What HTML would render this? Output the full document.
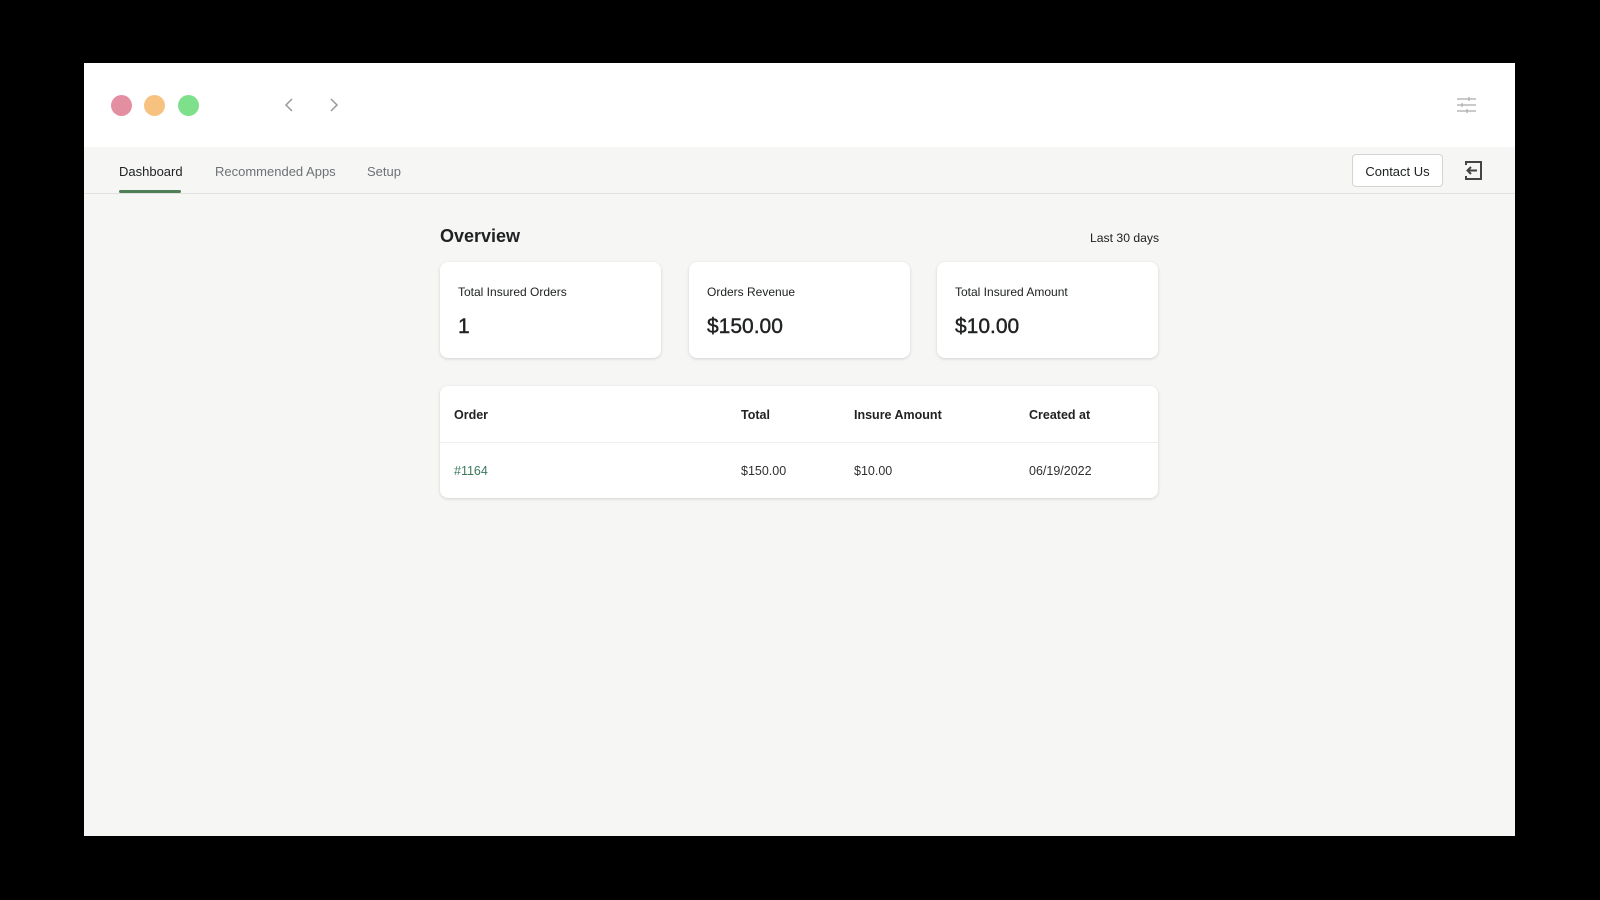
<!DOCTYPE html>
<html><head><meta charset="utf-8"><style>
*{box-sizing:border-box;margin:0;padding:0}
body{width:1600px;height:900px;background:#000;position:relative;overflow:hidden;font-family:"Liberation Sans",sans-serif;color:#202223}
.win{position:absolute;left:84px;top:63px;width:1431px;height:773px;background:#f6f6f5}
.top{position:absolute;left:0;top:0;width:100%;height:84px;background:#fff}
.dot{position:absolute;top:32px;width:21px;height:21px;border-radius:50%}
.tabs{position:absolute;left:0;top:84px;width:100%;height:47px;border-bottom:1px solid #e1e1e1}
.tab{position:absolute;top:17px;font-size:13px;color:#6d7175}
.abs{position:absolute}
.card{position:absolute;top:199px;width:221px;height:96px;background:#fff;border-radius:8px;box-shadow:0 1px 3px rgba(0,0,0,.15)}
.card .l{position:absolute;left:18px;top:23px;font-size:12px;color:#202223}
.card .v{position:absolute;left:18px;top:53px;font-size:21px;color:#202223;-webkit-text-stroke:0.4px #202223}
.th{position:absolute;top:22px;font-size:12.5px;font-weight:bold;color:#202223}
.td{position:absolute;top:78px;font-size:12.5px;color:#303030}
</style></head><body>
<div class="win">
 <div class="top">
  <div class="dot" style="left:27px;background:#e48ea1"></div>
  <div class="dot" style="left:60px;background:#f7c27f"></div>
  <div class="dot" style="left:94px;background:#7ee08a"></div>
  <svg class="abs" style="left:198px;top:33px" width="16" height="18"><path d="M10 3 L4 9 L10 15" fill="none" stroke="#999" stroke-width="1.5"/></svg>
  <svg class="abs" style="left:241px;top:33px" width="16" height="18"><path d="M6 3 L12 9 L6 15" fill="none" stroke="#999" stroke-width="1.5"/></svg>
  <svg class="abs" style="left:1372px;top:32px" width="22" height="20"><g stroke="#aaa" stroke-width="1.2"><path d="M1 4H20M1 10H20M1 16H20"/><path d="M13 2v4M6 8v4M11 14v4"/></g></svg>
 </div>
 <div class="tabs">
  <div class="tab" style="left:35px;color:#202223">Dashboard</div>
  <div class="abs" style="left:35px;top:43px;width:62px;height:3px;background:#4f7f55;border-radius:2px"></div>
  <div class="tab" style="left:131px">Recommended Apps</div>
  <div class="tab" style="left:283px">Setup</div>
  <div class="abs" style="left:1268px;top:7px;width:91px;height:33px;background:#fff;border:1px solid #d4d4d4;border-radius:4px;font-size:13px;text-align:center;line-height:33px">Contact Us</div>
  <svg class="abs" style="left:1378px;top:13px" width="22" height="22"><g fill="none" stroke="#444" stroke-width="2"><path d="M4 5V2H19V19H4V16"/><path d="M15 10.5H6M9 7L5.5 10.5L9 14"/></g></svg>
 </div>
 <div class="abs" style="left:356px;top:163px;font-size:18px;font-weight:bold;color:#202223">Overview</div>
 <div class="abs" style="left:1006px;top:168px;font-size:12.2px">Last 30 days</div>
 <div class="card" style="left:356px"><div class="l">Total Insured Orders</div><div class="v">1</div></div>
 <div class="card" style="left:605px"><div class="l">Orders Revenue</div><div class="v">$150.00</div></div>
 <div class="card" style="left:853px"><div class="l">Total Insured Amount</div><div class="v">$10.00</div></div>
 <div class="abs" style="left:356px;top:323px;width:718px;height:112px;background:#fff;border-radius:8px;box-shadow:0 1px 3px rgba(0,0,0,.15)">
  <div class="th" style="left:14px">Order</div>
  <div class="th" style="left:301px">Total</div>
  <div class="th" style="left:414px">Insure Amount</div>
  <div class="th" style="left:589px">Created at</div>
  <div class="abs" style="left:0;top:56px;width:100%;height:1px;background:#eee"></div>
  <div class="td" style="left:14px;color:#3a7a5a">#1164</div>
  <div class="td" style="left:301px">$150.00</div>
  <div class="td" style="left:414px">$10.00</div>
  <div class="td" style="left:589px">06/19/2022</div>
 </div>
</div>
</body></html>
